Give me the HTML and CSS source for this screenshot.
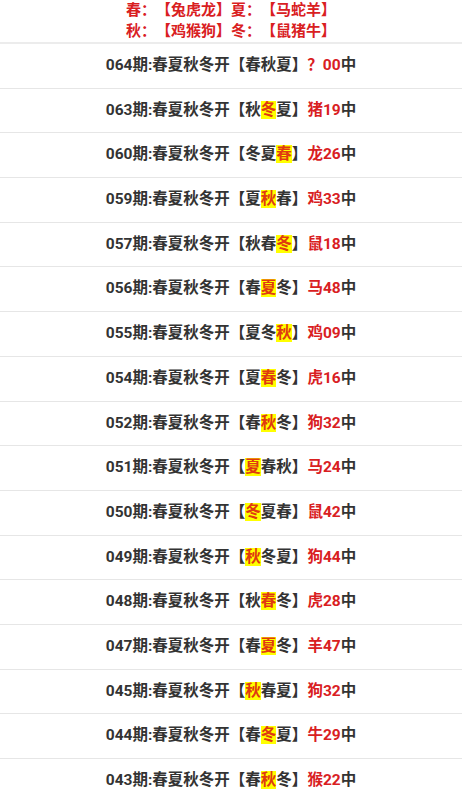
FILE: index.html
```html
<!DOCTYPE html>
<html lang="zh-CN">
<head>
  <meta charset="UTF-8" />
  <meta name="viewport" content="width=device-width, initial-scale=1.0" />
  <title>春夏秋冬开</title>
  <link rel="stylesheet" href="styles.css">
</head>
<body>

<div class="head">
  <p>春：【兔虎龙】夏：【马蛇羊】</p>
  <p>秋：【鸡猴狗】冬：【鼠猪牛】</p>
</div>

<div class="list" id="list"></div>

<script>
// 期数, 三季, 高亮位置(-1 不高亮), 开奖
const rows = [
  ["064", "春秋夏", -1, "？00"],
  ["063", "秋冬夏", 1, "猪19"],
  ["060", "冬夏春", 2, "龙26"],
  ["059", "夏秋春", 1, "鸡33"],
  ["057", "秋春冬", 2, "鼠18"],
  ["056", "春夏冬", 1, "马48"],
  ["055", "夏冬秋", 2, "鸡09"],
  ["054", "夏春冬", 1, "虎16"],
  ["052", "春秋冬", 1, "狗32"],
  ["051", "夏春秋", 0, "马24"],
  ["050", "冬夏春", 0, "鼠42"],
  ["049", "秋冬夏", 0, "狗44"],
  ["048", "秋春冬", 1, "虎28"],
  ["047", "春夏冬", 1, "羊47"],
  ["045", "秋春夏", 0, "狗32"],
  ["044", "春冬夏", 1, "牛29"],
  ["043", "春秋冬", 1, "猴22"]
];

const list = document.getElementById("list");
rows.forEach(r => {
  const d = document.createElement("div");
  d.className = "row";
  let s = "";
  [...r[1]].forEach((c, i) => {
    s += i === r[2] ? `<span class="hl">${c}</span>` : c;
  });
  d.innerHTML = `${r[0]}期:春夏秋冬开【${s}】<span class="red">${r[3]}</span>中`;
  list.appendChild(d);
});
</script>

</body>
</html>
```

FILE: styles.css
```css
body { margin: 0; font-family: Roboto, "Noto Sans CJK SC", sans-serif; background: #fff; color: #333; text-spacing-trim: space-all; }
.head { text-align: center; color: #d9201f; font-weight: bold; font-size: 15px; border-bottom: 2px solid #ececec; }
.head p { margin: 0; line-height: 21px; }
.row { height: 43.7px; line-height: 43.7px; border-bottom: 1px solid #e6e6e6; text-align: center; font-size: 15.5px; font-weight: bold; white-space: nowrap; }
.red { color: #d9201f; }
.hl { background: #ffff00; color: #e03a10; }
```
